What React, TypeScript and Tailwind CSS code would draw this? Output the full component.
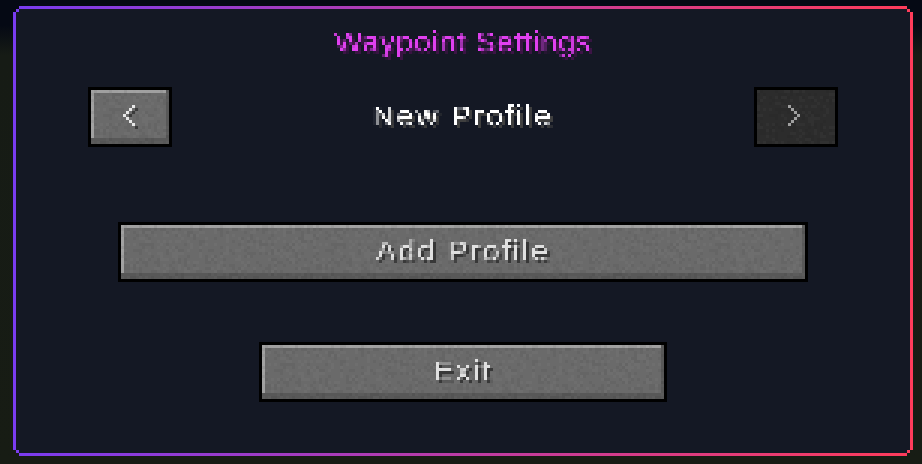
const pick = (seed: number) => {
  const v = Math.sin(seed * 12.9898) * 43758.5453;
  return v - Math.floor(v);
};

const GRAIN = Array.from({ length: 1600 }, (_, i) => ({
  x: (i % 64) * 3,
  y: Math.floor(i / 64) * 3,
  v: pick(i + 1),
})).filter((c) => c.v < 0.25 || c.v > 0.8);

const LEFT = [[9, 0], [6, 3], [3, 6], [0, 9], [3, 12], [6, 15], [9, 18]];
const RIGHT = [[0, 0], [3, 3], [6, 6], [9, 9], [6, 12], [3, 15], [0, 18]];

function Defs() {
  return (
    <svg className="absolute h-0 w-0" aria-hidden>
      <defs>
        <filter id="pixelate" x="0" y="0" width="100%" height="100%" colorInterpolationFilters="sRGB">
          <feFlood x="1" y="1" width="1" height="1" />
          <feComposite width="3" height="3" />
          <feTile result="grid" />
          <feComposite in="SourceGraphic" in2="grid" operator="in" />
          <feMorphology operator="dilate" radius="1" />
        </filter>
        <pattern id="grain" width="192" height="75" patternUnits="userSpaceOnUse">
          {GRAIN.map((c) => (
            <rect
              key={`${c.x}-${c.y}`}
              x={c.x}
              y={c.y}
              width="3"
              height="3"
              fill={c.v < 0.25 ? '#000' : '#fff'}
              opacity={c.v < 0.25 ? 0.05 : 0.025}
            />
          ))}
        </pattern>
      </defs>
    </svg>
  );
}

function Grain() {
  return (
    <svg className="pointer-events-none absolute inset-0 h-full w-full" aria-hidden>
      <rect width="100%" height="100%" fill="url(#grain)" />
    </svg>
  );
}

function Chevron({ cells, fill, shadow }: { cells: number[][]; fill: string; shadow?: string }) {
  return (
    <svg width="15" height="24" viewBox="0 0 15 24" className="relative" aria-hidden>
      {shadow &&
        cells.map(([x, y]) => <rect key={`s${x}-${y}`} x={x + 3} y={y + 3} width="3" height="3" fill={shadow} />)}
      {cells.map(([x, y]) => (
        <rect key={`${x}-${y}`} x={x} y={y} width="3" height="3" fill={fill} />
      ))}
    </svg>
  );
}

function McButton({ className, children }: { className: string; children: React.ReactNode }) {
  return (
    <button
      type="button"
      className={`relative flex h-[60px] items-center justify-center border-[3px] border-black bg-[#6a6a6a] shadow-[inset_-3px_-6px_0_#585858,inset_3px_3px_0_#a0a0a0] ${className}`}
    >
      <Grain />
      {children}
    </button>
  );
}

function ButtonLabel({ children }: { children: string }) {
  return (
    <span className="relative pb-[3px] font-['Liberation_Sans',sans-serif] text-[30px] leading-[36px] tracking-[2.5px] text-[#e0e0e0] [filter:url(#pixelate)_drop-shadow(3px_3px_0_#383838)]">
      {children}
    </span>
  );
}

export default function App() {
  return (
    <div className="relative h-[464px] w-[922px] overflow-hidden bg-[linear-gradient(180deg,#050914_0px,#050914_25px,#161b15_55px,#171c14_100%)] pt-[6px] pl-[13px]">
      <Defs />
      <div className="h-[450px] w-[900px] bg-[linear-gradient(90deg,#7a3cf0_0%,#ff3c5a_100%)] p-[3px] [clip-path:polygon(6px_0,894px_0,894px_3px,897px_3px,897px_6px,900px_6px,900px_444px,897px_444px,897px_447px,894px_447px,894px_450px,6px_450px,6px_447px,3px_447px,3px_444px,0_444px,0_6px,3px_6px,3px_3px,6px_3px)]">
        <div className="flex h-[444px] w-[894px] flex-col items-center bg-[#141824] [clip-path:polygon(3px_0,891px_0,891px_3px,894px_3px,894px_441px,891px_441px,891px_444px,3px_444px,3px_441px,0_441px,0_3px,3px_3px)]">
          <h1 className="mt-[15px] h-[63px] font-['Liberation_Sans',sans-serif] text-[30px] leading-[36px] tracking-[1px] text-[#e040f0] [filter:url(#pixelate)_drop-shadow(3px_3px_0_#3c1445)]">
            Waypoint Settings
          </h1>

          <div className="flex w-full items-center justify-between px-[72px]">
            <McButton className="w-[84px]">
              <Chevron cells={LEFT} fill="#e8e8e8" shadow="#3a3a3a" />
            </McButton>
            <span className="pb-[3px] font-['Liberation_Sans',sans-serif] text-[30px] leading-[36px] tracking-[2.5px] text-white [filter:url(#pixelate)_drop-shadow(3px_3px_0_#3f3f3f)]">
              New Profile
            </span>
            <button
              type="button"
              className="relative flex h-[60px] w-[84px] items-center justify-center border-[3px] border-black bg-[#2c2c2c]"
            >
              <Grain />
              <Chevron cells={RIGHT} fill="#a0a0a0" />
            </button>
          </div>

          <McButton className="mt-[75px] w-[690px]">
            <ButtonLabel>Add Profile</ButtonLabel>
          </McButton>

          <McButton className="mt-[60px] w-[408px]">
            <ButtonLabel>Exit</ButtonLabel>
          </McButton>
        </div>
      </div>
    </div>
  );
}
